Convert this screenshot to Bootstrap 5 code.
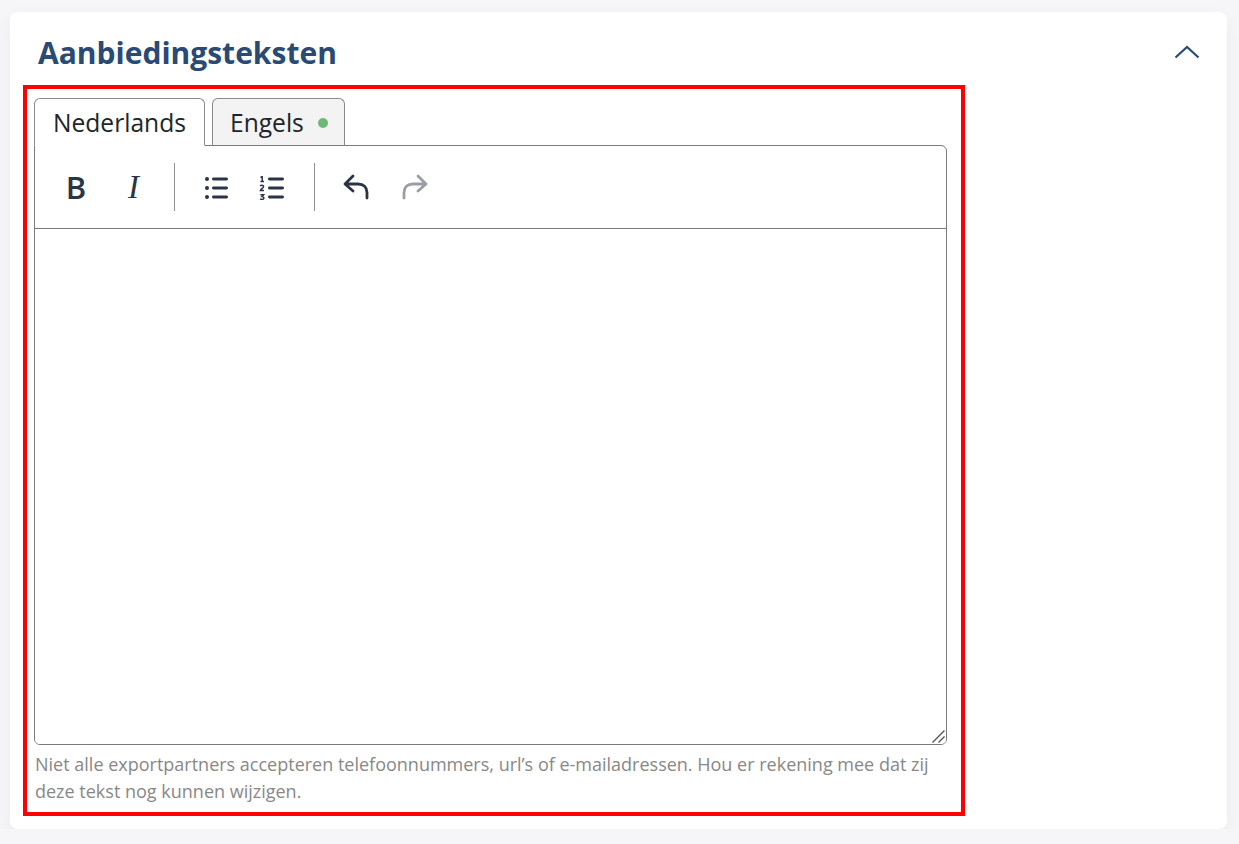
<!DOCTYPE html>
<html lang="nl">
<head>
    <meta charset="UTF-8">
    <meta name="viewport" content="width=device-width, initial-scale=1.0">
    <title>Aanbiedingsteksten</title>
    <link href="https://cdn.jsdelivr.net/npm/bootstrap@5.3.3/dist/css/bootstrap.min.css" rel="stylesheet">
    <style>
        body {
            background-color: #f6f6f9;
            font-family: "Open Sans", sans-serif;
            overflow: hidden;
        }

        /* Panel */
        .offer-panel {
            width: 1217px;
            height: 817px;
            margin: 12px 0 0 10px;
            padding: 0 13px;
            border-radius: 8px;
            background: #fff;
            box-shadow: 0 6px 16px rgba(60, 60, 90, 0.06);
        }

        .offer-head {
            height: 73px;
            padding: 6px 14px 0 15px;
        }

        .offer-head h2 {
            margin: 3px 0 0;
            font-size: 30px;
            font-weight: 700;
            color: #2a4a76;
        }

        /* Red marker round the field */
        .marker-box {
            width: 942px;
            height: 731px;
            padding: 9px 14px 0 7px;
            border: 4px solid #f00;
        }

        /* Tabs */
        .lang-tabs {
            gap: 7px;
            padding-left: 0;
            border-bottom: 0;
            position: relative;
            z-index: 1;
            margin-bottom: -1px;
        }

        .lang-tabs .nav-link {
            height: 48px;
            padding: 8px 18px 6px;
            font-size: 24.6px;
            line-height: 34px;
            color: #212529;
            background: #f3f3f3;
            border: 1px solid #8a8a8a;
            border-bottom: 1px solid #7a7a7a;
            border-radius: 6px 6px 0 0;
            margin: 0;
        }

        .lang-tabs .nav-link.active {
            background: #fff;
            color: #212529;
            border-color: #8a8a8a #8a8a8a #fff;
        }

        .lang-tabs .lang-second {
            padding-right: 16px;
            padding-left: 17px;
        }

        .lang-dot {
            width: 10px;
            height: 10px;
            margin-left: 14px;
            border-radius: 50%;
            background: #6fb877;
        }

        /* Editor */
        .editor-box {
            position: relative;
            width: 913px;
            height: 600px;
            border: 1px solid #7a7a7a;
            border-radius: 0 6px 6px 6px;
            overflow: hidden;
        }

        .editor-tools {
            height: 83px;
            padding-left: 13px;
            border-bottom: 1px solid #7a7a7a;
        }

        .tool-btn {
            width: 56px;
            height: 48px;
            padding: 0;
            border: 0;
            background: none;
            color: #2b3445;
        }

        .tool-btn.is-off {
            width: 62px;
            color: #9a9da3;
        }

        .tool-bold {
            font-size: 31px;
            font-weight: 600;
            font-family: "Open Sans", sans-serif;
        }

        .tool-btn.tool-italic {
            padding-left: 3px;
            font-size: 33px;
            font-style: italic;
            font-family: "Liberation Serif", serif;
        }

        .tool-sep {
            width: 1px;
            height: 48px;
            margin: 0 13px 0 14px;
            background: #8f8f8f;
        }

        .editor-text {
            display: block;
            width: 100%;
            height: 516px;
            padding: 12px;
            border: 0;
            outline: 0;
            resize: none;
        }

        .editor-grip {
            position: absolute;
            right: 1px;
            bottom: 1px;
        }

        .field-help {
            margin: 6px 0 0 1px;
            font-size: 18px;
            line-height: 27px;
            color: #888;
        }
    </style>
</head>
<body>

    <div class="offer-panel">
        <div class="offer-head d-flex align-items-center justify-content-between">
            <h2>Aanbiedingsteksten</h2>
            <svg width="26" height="14" viewBox="0 0 26 14" fill="none" stroke="#2a4a76" stroke-width="2.2" aria-hidden="true">
                <path d="M1.5 12.5 13 2 24.5 12.5"/>
            </svg>
        </div>

        <div class="marker-box">
            <ul class="nav nav-tabs lang-tabs">
                <li class="nav-item"><a class="nav-link active d-flex align-items-center" href="#">Nederlands</a></li>
                <li class="nav-item">
                    <a class="nav-link lang-second d-flex align-items-center" href="#">Engels<span class="lang-dot"></span></a>
                </li>
            </ul>

            <div class="editor-box">
                <div class="editor-tools d-flex align-items-center">
                    <button type="button" class="tool-btn tool-bold">B</button>
                    <button type="button" class="tool-btn tool-italic">I</button>
                    <span class="tool-sep"></span>
                    <button type="button" class="tool-btn" aria-label="Lijst">
                        <svg width="26" height="24" viewBox="0 0 26 24" fill="currentColor">
                            <circle cx="4" cy="3" r="2"/><circle cx="4" cy="12" r="2"/><circle cx="4" cy="21" r="2"/>
                            <rect x="9" y="1.6" width="16" height="2.8" rx="1.4"/><rect x="9" y="10.6" width="16" height="2.8" rx="1.4"/><rect x="9" y="19.6" width="16" height="2.8" rx="1.4"/>
                        </svg>
                    </button>
                    <button type="button" class="tool-btn" aria-label="Genummerde lijst">
                        <svg width="26" height="24" viewBox="0 0 26 24" fill="currentColor">
                            <path d="M1.5 1.5 3.2 .6V5.6M1.4 5.6H5" fill="none" stroke="currentColor" stroke-width="1.5"/>
                            <path d="M1.2 10.2C2 8.8 4.8 9 4.6 10.8 4.5 12 2 12.8 1.4 14.4H5" fill="none" stroke="currentColor" stroke-width="1.5"/>
                            <path d="M1.4 18.8H4.6L3 20.6C5.6 20.6 5.4 23.4 3 23.4 2.2 23.4 1.6 23.2 1.2 22.8" fill="none" stroke="currentColor" stroke-width="1.5"/>
                            <rect x="9" y="1.6" width="16" height="2.8" rx="1.4"/><rect x="9" y="10.6" width="16" height="2.8" rx="1.4"/><rect x="9" y="19.6" width="16" height="2.8" rx="1.4"/>
                        </svg>
                    </button>
                    <span class="tool-sep"></span>
                    <button type="button" class="tool-btn" aria-label="Ongedaan maken">
                        <svg width="26" height="26" viewBox="0 0 26 26" fill="none" stroke="currentColor" stroke-width="2.8" stroke-linecap="round" stroke-linejoin="round">
                            <path d="M10 2 2 10 10 17M2.5 10H15C20.5 10 24 13.5 24 18.5V24"/>
                        </svg>
                    </button>
                    <button type="button" class="tool-btn is-off" aria-label="Opnieuw">
                        <svg width="26" height="26" viewBox="0 0 26 26" fill="none" stroke="currentColor" stroke-width="2.8" stroke-linecap="round" stroke-linejoin="round">
                            <path d="M16 2 24 10 16 17M23.5 10H11C5.5 10 2 13.5 2 18.5V24"/>
                        </svg>
                    </button>
                </div>
                <textarea class="editor-text" aria-label="Aanbiedingstekst"></textarea>
                <svg class="editor-grip" width="13" height="13" viewBox="0 0 13 13" stroke="#555" stroke-width="1.4" aria-hidden="true">
                    <path d="M.5 12.5 12.5 .5M6.5 12.5 12.5 6.5"/>
                </svg>
            </div>

            <p class="field-help">Niet alle exportpartners accepteren telefoonnummers, url’s of e-mailadressen. Hou er rekening mee dat zij deze tekst nog kunnen wijzigen.</p>
        </div>
    </div>

    <script src="https://cdn.jsdelivr.net/npm/bootstrap@5.3.3/dist/js/bootstrap.bundle.min.js"></script>
</body>
</html>
